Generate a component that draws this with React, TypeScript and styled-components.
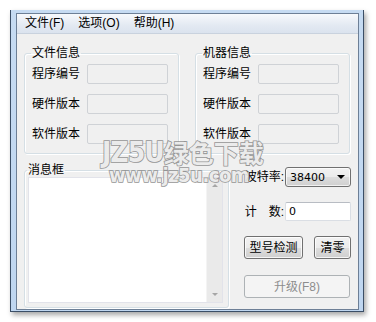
import * as React from 'react';
import styled, { createGlobalStyle } from 'styled-components';

const GlobalStyle = createGlobalStyle`
  html, body {
    margin: 0;
    padding: 0;
    background: #ffffff;
  }
  body {
    font-family: "Liberation Sans", "Noto Sans CJK SC", sans-serif;
    font-size: 12px;
    color: #000000;
  }
`;

const UI_FONT = `"Liberation Sans", "Noto Sans CJK SC", sans-serif`;

const Page = styled.div`
  position: relative;
  width: 376px;
  height: 322px;
  box-sizing: border-box;
  padding: 10px 0 0 10px;
  overflow: hidden;
`;

const Frame = styled.div`
  width: 354px;
  height: 302px;
  box-sizing: border-box;
  display: flex;
  padding: 3px 5px 1px 5px;
  border: 1px solid #3b4e66;
  border-top: none;
  background: linear-gradient(to bottom, #c6dbf2, #bfd6f0);
  box-shadow: 2px 3px 5px rgba(0, 0, 0, 0.35);
`;

const Client = styled.div`
  flex: 1;
  display: flex;
  flex-direction: column;
  border: 1px solid #6d7f96;
  background: #f0f0f0;
`;

const MenuBar = styled.div`
  height: 19px;
  display: flex;
  align-items: center;
  padding-left: 1px;
  border-bottom: 1px solid #c9d2de;
  background: linear-gradient(to bottom, #f7f9fc, #e3e9f2 60%, #dbe3ee);
`;

const MenuItem = styled.span`
  padding: 0 7px;
  line-height: 19px;
  font-family: ${UI_FONT};
  font-size: 12px;
`;

const Body = styled.div`
  flex: 1;
  display: flex;
  flex-direction: column;
  padding: 12px 7px 1px 7px;
`;

const TopRow = styled.div`
  display: grid;
  grid-template-columns: 155px 155px;
  column-gap: 16px;
`;

const Group = styled.fieldset<{ $pad: string; $width?: number }>`
  margin: 0;
  min-width: 0;
  box-sizing: border-box;
  ${({ $width }) => ($width ? `width: ${$width}px;` : '')}
  padding: ${({ $pad }) => $pad};
  border: 1px solid #d5dfe5;
  border-radius: 3px;
  box-shadow: inset 1px 1px 0 #ffffff, 1px 1px 0 #ffffff;
`;

const Legend = styled.legend`
  padding: 0 1px;
  margin-left: -1px;
  line-height: 14px;
  font-size: 12px;
`;

const FieldGrid = styled.div`
  display: grid;
  grid-template-columns: 55px 81px;
  grid-auto-rows: 20px;
  row-gap: 10px;
  align-items: center;
`;

const Label = styled.span`
  font-size: 12px;
  line-height: 14px;
  white-space: pre;
`;

const ReadOnlyBox = styled.div`
  height: 20px;
  box-sizing: border-box;
  border: 1px solid #cfd2d6;
  border-radius: 2px;
  background: #f0f0f0;
`;

const BottomRow = styled.div`
  display: flex;
  margin-top: 9px;
  gap: 15px;
`;

const MessageBox = styled.div`
  height: 126px;
  display: flex;
  box-sizing: border-box;
  border: 1px solid #e2e3ea;
  background: #ffffff;
`;

const MessageText = styled.div`
  flex: 1;
`;

const ScrollTrack = styled.div`
  width: 16px;
  display: flex;
  flex-direction: column;
  justify-content: space-between;
  align-items: center;
  padding: 6px 0;
  box-sizing: border-box;
  background: #eaeaea;
  border-left: 1px solid #f4f4f4;
`;

const Arrow = styled.span<{ $down?: boolean }>`
  width: 0;
  height: 0;
  border-left: 3px solid transparent;
  border-right: 3px solid transparent;
  ${({ $down }) => ($down ? 'border-top: 3px solid #a6a6a6;' : 'border-bottom: 3px solid #a6a6a6;')}
`;

const Controls = styled.div`
  width: 107px;
  display: flex;
  flex-direction: column;
`;

const ControlRow = styled.div<{ $top: number }>`
  display: grid;
  grid-template-columns: 41px 66px;
  align-items: center;
  margin-top: ${({ $top }) => $top}px;
`;

const RowLabel = styled.span`
  font-size: 12px;
  line-height: 14px;
  white-space: pre;
  text-align: right;
  padding-right: 1px;
`;

const Combo = styled.div`
  height: 20px;
  box-sizing: border-box;
  display: flex;
  align-items: center;
  justify-content: space-between;
  padding: 0 5px 0 4px;
  border: 1px solid #707070;
  border-radius: 3px;
  background: linear-gradient(to bottom, #f2f2f2 0%, #ebebeb 50%, #dddddd 51%, #cfcfcf 100%);
  box-shadow: inset 0 0 0 1px rgba(255, 255, 255, 0.7);
  font-family: "DejaVu Sans", sans-serif;
  font-size: 11px;
`;

const ComboArrow = styled.span`
  width: 0;
  height: 0;
  border-left: 4px solid transparent;
  border-right: 4px solid transparent;
  border-top: 4px solid #000000;
`;

const TextBox = styled.div`
  height: 19px;
  box-sizing: border-box;
  display: flex;
  align-items: center;
  padding-left: 3px;
  border: 1px solid #dadee4;
  border-top-color: #b8bcc3;
  border-radius: 2px;
  background: #ffffff;
  font-family: "DejaVu Sans", sans-serif;
  font-size: 11px;
`;

const ButtonRow = styled.div`
  display: flex;
  justify-content: space-between;
  margin-top: 15px;
`;

const Button = styled.button<{ $width: number; $disabled?: boolean }>`
  width: ${({ $width }) => $width}px;
  height: 23px;
  margin: 0;
  padding: 0;
  box-sizing: border-box;
  border: 1px solid ${({ $disabled }) => ($disabled ? '#adb2b5' : '#707070')};
  border-radius: 3px;
  background: ${({ $disabled }) =>
    $disabled
      ? '#f4f4f4'
      : 'linear-gradient(to bottom, #f2f2f2 0%, #ebebeb 50%, #dddddd 51%, #cfcfcf 100%)'};
  box-shadow: inset 0 0 0 1px ${({ $disabled }) => ($disabled ? '#f4f4f4' : 'rgba(255, 255, 255, 0.8)')};
  color: ${({ $disabled }) => ($disabled ? '#8d8d8d' : '#000000')};
  font-family: ${UI_FONT};
  font-size: 12px;
  line-height: 14px;
`;

const UpgradeRow = styled.div`
  margin-top: 16px;
  display: flex;
`;

// watermark stamped over the screenshot
const Watermark = styled.div`
  position: absolute;
  left: 102px;
  top: 139px;
  z-index: 10;
  pointer-events: none;
  display: flex;
  flex-direction: column;
  color: #ebebeb;
  -webkit-text-stroke: 1.6px #8e8e8e;
  paint-order: stroke fill;
  font-weight: bold;
  opacity: 0.92;
`;

const MarkTitle = styled.div`
  display: flex;
  align-items: flex-end;
  height: 27px;
`;

const MarkLatin = styled.span`
  font-family: "DejaVu Sans Condensed", "DejaVu Sans", sans-serif;
  font-size: 28px;
  line-height: 27px;
  letter-spacing: -1px;
`;

const MarkCjk = styled.span`
  font-family: "Noto Sans CJK SC", sans-serif;
  font-size: 25px;
  line-height: 27px;
  letter-spacing: 0;
`;

const MarkUrl = styled.span`
  font-family: "DejaVu Sans Condensed", "DejaVu Sans", sans-serif;
  font-size: 20px;
  line-height: 18px;
  margin-left: 7px;
  letter-spacing: -0.5px;
`;

const InfoGroup: React.FC<{ title: string }> = ({ title }) => (
  <Group $pad="4px 10px 9px 7px">
    <Legend>{title}</Legend>
    <FieldGrid>
      <Label>程序编号</Label>
      <ReadOnlyBox />
      <Label>硬件版本</Label>
      <ReadOnlyBox />
      <Label>软件版本</Label>
      <ReadOnlyBox />
    </FieldGrid>
  </Group>
);

const App: React.FC = () => {
  return (
    <Page>
      <GlobalStyle />
      <Frame>
        <Client>
          <MenuBar>
            <MenuItem>文件(F)</MenuItem>
            <MenuItem>选项(O)</MenuItem>
            <MenuItem>帮助(H)</MenuItem>
          </MenuBar>
          <Body>
            <TopRow>
              <InfoGroup title="文件信息" />
              <InfoGroup title="机器信息" />
            </TopRow>
            <BottomRow>
              <Group $pad="0 5px 4px 3px" $width={205}>
                <Legend>消息框</Legend>
                <MessageBox>
                  <MessageText />
                  <ScrollTrack>
                    <Arrow />
                    <Arrow $down />
                  </ScrollTrack>
                </MessageBox>
              </Group>
              <Controls>
                <ControlRow $top={4}>
                  <RowLabel>波特率:</RowLabel>
                  <Combo>
                    <span>38400</span>
                    <ComboArrow />
                  </Combo>
                </ControlRow>
                <ControlRow $top={15}>
                  <RowLabel>计　数:</RowLabel>
                  <TextBox>0</TextBox>
                </ControlRow>
                <ButtonRow>
                  <Button $width={59}>型号检测</Button>
                  <Button $width={37}>清零</Button>
                </ButtonRow>
                <UpgradeRow>
                  <Button $width={106} $disabled>升级(F8)</Button>
                </UpgradeRow>
              </Controls>
            </BottomRow>
          </Body>
        </Client>
      </Frame>
      <Watermark>
        <MarkTitle>
          <MarkLatin>JZ5U</MarkLatin>
          <MarkCjk>绿色下载</MarkCjk>
        </MarkTitle>
        <MarkUrl>www.jz5u.com</MarkUrl>
      </Watermark>
    </Page>
  );
};

export default App;
